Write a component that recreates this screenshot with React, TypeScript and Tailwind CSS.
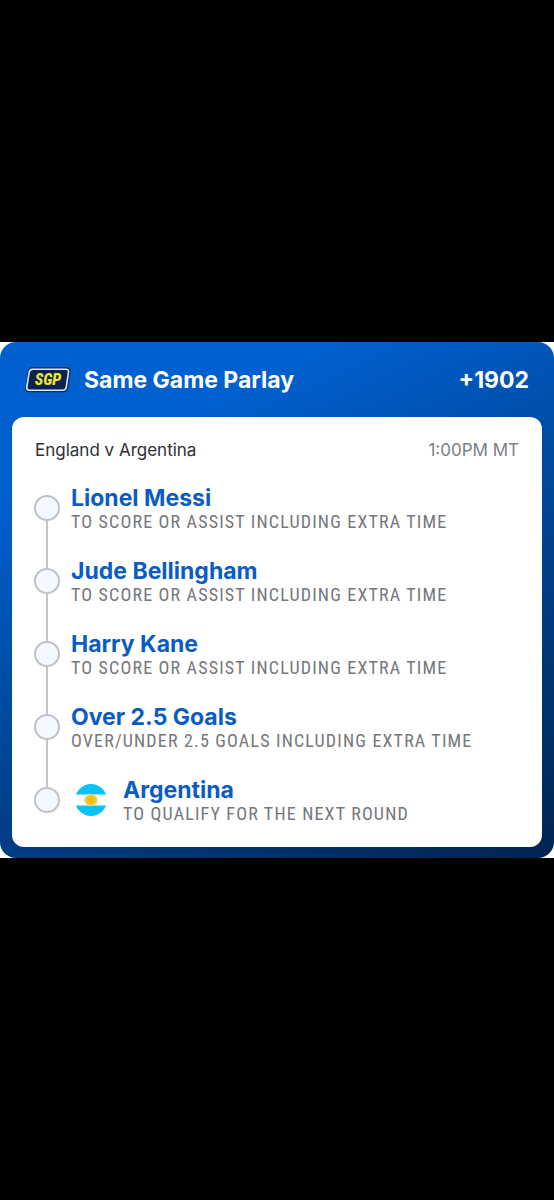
import { clsx } from "clsx";

type Leg = {
  title: string;
  market: string;
  flag?: boolean;
};

const legs: Leg[] = [
  { title: "Lionel Messi", market: "To score or assist including extra time" },
  { title: "Jude Bellingham", market: "To score or assist including extra time" },
  { title: "Harry Kane", market: "To score or assist including extra time" },
  { title: "Over 2.5 Goals", market: "Over/under 2.5 goals including extra time" },
  { title: "Argentina", market: "To qualify for the next round", flag: true },
];

function SgpBadge() {
  return (
    <svg width="46" height="26" viewBox="0 0 46 26" role="img" aria-label="SGP">
      <path
        d="M7 0.3H42Q46.2 0.3 45.6 4.5L43.3 21Q42.6 25.2 38.5 25.2H4Q-0.3 25.2 0.3 21L2.7 4.5Q3.4 0.3 7 0.3Z"
        fill="#0b2f6a"
      />
      <path
        d="M7.5 2.2H40.8Q44 2.2 43.5 5.2L41.3 20Q40.8 23.2 37.6 23.2H4.6Q1.4 23.2 1.8 20L4.2 5.4Q4.7 2.2 7.5 2.2Z"
        fill="#0b2350"
        stroke="#dfe8fa"
        strokeWidth="1.6"
      />
      <text
        x="23"
        y="18"
        textAnchor="middle"
        fill="#f2e52e"
        fontSize="16"
        fontWeight="800"
        fontStyle="italic"
        className="font-['Roboto_Condensed','Roboto',sans-serif]"
      >
        SGP
      </text>
    </svg>
  );
}

function ArgentinaFlag() {
  return (
    <svg
      className="mr-4 ml-1 mt-[6px] shrink-0"
      width="32"
      height="32"
      viewBox="0 0 32 32"
      role="img"
      aria-label="Argentina flag"
    >
      <defs>
        <clipPath id="flag-circle">
          <circle cx="16" cy="16" r="16" />
        </clipPath>
        <radialGradient id="flag-sun">
          <stop offset="0" stopColor="#eebb10" />
          <stop offset="0.75" stopColor="#f2c830" />
          <stop offset="1" stopColor="#f8df80" />
        </radialGradient>
      </defs>
      <g clipPath="url(#flag-circle)">
        <rect width="32" height="32" fill="#fff" />
        <rect width="32" height="10.5" fill="#0cc0f8" />
        <rect y="21.5" width="32" height="10.5" fill="#0cc0f8" />
        <ellipse cx="16" cy="16" rx="6.8" ry="6" fill="url(#flag-sun)" />
      </g>
    </svg>
  );
}

function LegRow({ leg, first, last }: { leg: Leg; first: boolean; last: boolean }) {
  return (
    <li className="flex">
      <div className="mr-[11px] flex w-[26px] shrink-0 flex-col items-center">
        <span className={clsx("h-[9px] w-[2px]", !first && "bg-[#c2c4ca]")} />
        <span className="size-[26px] shrink-0 rounded-full border-2 border-[#bfc1c8] bg-[#f4f9ff]" />
        <span className={clsx("w-[2px] flex-1", !last && "bg-[#c2c4ca]")} />
      </div>
      {leg.flag && <ArgentinaFlag />}
      <div className={clsx("min-w-0", !last && "pb-[25px]")}>
        <h3 className="text-[23px]/6 font-bold text-[#0a5cc4]">{leg.title}</h3>
        <p className="font-['Roboto_Condensed','Liberation_Sans_Narrow','Roboto',sans-serif] text-lg/6 tracking-[0.065em] text-[#75777b] uppercase">
          {leg.market}
        </p>
      </div>
    </li>
  );
}

export default function App() {
  return (
    <main className="flex min-h-screen items-center bg-black font-['Inter',sans-serif]">
      <div className="w-full bg-white">
        <section className="rounded-2xl bg-linear-155 from-[#0060cf] from-20% to-[#002450] px-3 pb-[11px]">
          <header className="flex h-[75px] items-center px-[13px] pt-px text-white">
            <SgpBadge />
            <h1 className="ml-[13px] flex-1 text-[23px] font-bold">Same Game Parlay</h1>
            <span className="text-[23px] font-bold">+1902</span>
          </header>

          <div className="rounded-xl bg-white px-[22px] pt-5 pb-[21px]">
            <div className="mb-[23px] flex items-center justify-between px-px text-[17px]/[26px]">
              <h2 className="text-[#2e2f33]">England v Argentina</h2>
              <time dateTime="13:00" className="text-[#7c7e83]">
                1:00PM MT
              </time>
            </div>

            <ol>
              {legs.map((leg, i) => (
                <LegRow
                  key={leg.title}
                  leg={leg}
                  first={i === 0}
                  last={i === legs.length - 1}
                />
              ))}
            </ol>
          </div>
        </section>
      </div>
    </main>
  );
}
